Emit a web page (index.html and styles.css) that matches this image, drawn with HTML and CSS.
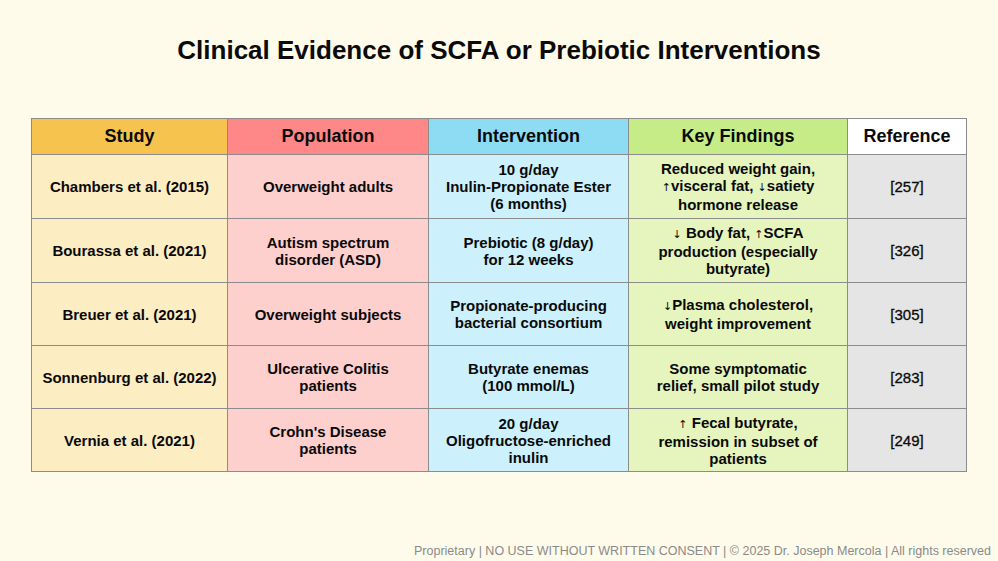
FILE: index.html
```html
<!DOCTYPE html>
<html>
<head>
<meta charset="utf-8">
<link rel="stylesheet" href="styles.css">
</head>
<body>
<div class="page">
  <h1 class="title">Clinical Evidence of SCFA or Prebiotic Interventions</h1>
  <table class="evidence">
    <colgroup>
      <col class="c-study"><col class="c-pop"><col class="c-int"><col class="c-key"><col class="c-ref">
    </colgroup>
    <thead>
      <tr>
        <th class="study">Study</th>
        <th class="pop">Population</th>
        <th class="int">Intervention</th>
        <th class="key">Key Findings</th>
        <th class="ref">Reference</th>
      </tr>
    </thead>
    <tbody>
      <tr class="r1">
        <td class="study">Chambers et al. (2015)</td>
        <td class="pop">Overweight adults</td>
        <td class="int">10 g/day<br>Inulin-Propionate Ester<br>(6 months)</td>
        <td class="key">Reduced weight gain,<br><span class="ar">↑&#xFE0E;</span>visceral fat, <span class="ar">↓&#xFE0E;</span>satiety<br>hormone release</td>
        <td class="ref">[257]</td>
      </tr>
      <tr class="r2">
        <td class="study">Bourassa et al. (2021)</td>
        <td class="pop">Autism spectrum<br>disorder (ASD)</td>
        <td class="int">Prebiotic (8 g/day)<br>for 12 weeks</td>
        <td class="key"><span class="ar">↓&#xFE0E;</span> Body fat, <span class="ar">↑&#xFE0E;</span>SCFA<br>production (especially<br>butyrate)</td>
        <td class="ref">[326]</td>
      </tr>
      <tr class="r3">
        <td class="study">Breuer et al. (2021)</td>
        <td class="pop">Overweight subjects</td>
        <td class="int">Propionate-producing<br>bacterial consortium</td>
        <td class="key"><span class="ar">↓&#xFE0E;</span>Plasma cholesterol,<br>weight improvement</td>
        <td class="ref">[305]</td>
      </tr>
      <tr class="r3">
        <td class="study">Sonnenburg et al. (2022)</td>
        <td class="pop">Ulcerative Colitis<br>patients</td>
        <td class="int">Butyrate enemas<br>(100 mmol/L)</td>
        <td class="key">Some symptomatic<br>relief, small pilot study</td>
        <td class="ref">[283]</td>
      </tr>
      <tr class="r3">
        <td class="study">Vernia et al. (2021)</td>
        <td class="pop">Crohn's Disease<br>patients</td>
        <td class="int">20 g/day<br>Oligofructose-enriched<br>inulin</td>
        <td class="key"><span class="ar">↑&#xFE0E;</span> Fecal butyrate,<br>remission in subset of<br>patients</td>
        <td class="ref">[249]</td>
      </tr>
    </tbody>
  </table>
  <div class="footer">Proprietary | NO USE WITHOUT WRITTEN CONSENT | © 2025 Dr. Joseph Mercola | All rights reserved</div>
</div>
</body>
</html>
```
FILE: styles.css
```css
html, body {
  margin: 0;
  padding: 0;
  background: #fffbea;
}
.page {
  width: 998px;
  height: 561px;
  box-sizing: border-box;
  padding-top: 33px;
  font-family: "Liberation Sans", Arial, sans-serif;
  color: #0a0a0a;
  display: flex;
  flex-direction: column;
}
.title {
  margin: 0;
  text-align: center;
  font-size: 26px;
  line-height: 34px;
  font-weight: bold;
}
.evidence {
  margin: 51px 0 0 31px;
  width: 935px;
  border-collapse: collapse;
  table-layout: fixed;
}
.c-study { width: 196px; }
.c-pop { width: 201px; }
.c-int { width: 200px; }
.c-key { width: 219px; }
.c-ref { width: 119px; }
.evidence th, .evidence td {
  border: 1px solid #8c8c8c;
  text-align: center;
  vertical-align: middle;
  padding: 0 2px;
  font-weight: bold;
}
.evidence th {
  height: 35px;
  font-size: 18px;
}
.evidence td {
  font-size: 15px;
  line-height: 17px;
}
.r1 td, .r2 td { height: 63px; }
.r3 td { height: 62px; }
th.study { background: #f6c44e; }
th.pop { background: #fd8887; }
th.int { background: #8edcf4; }
th.key { background: #c6ec87; }
th.ref { background: #ffffff; }
td.study { background: #fdedc2; }
td.pop { background: #fdcfcd; }
td.int { background: #ccf1fc; }
td.key { background: #e6f5bd; }
td.ref { background: #e5e5e5; font-weight: normal; -webkit-text-stroke: 0.3px #0a0a0a; }
.ar {
  font-family: "DejaVu Sans", sans-serif;
  font-weight: normal;
  font-size: 11px;
  color: #0a0a0a;
}
.footer {
  margin-top: auto;
  padding: 0 7px 1px 0;
  text-align: right;
  font-size: 12.5px;
  color: #8a8a8a;
  line-height: 18px;
}
```
